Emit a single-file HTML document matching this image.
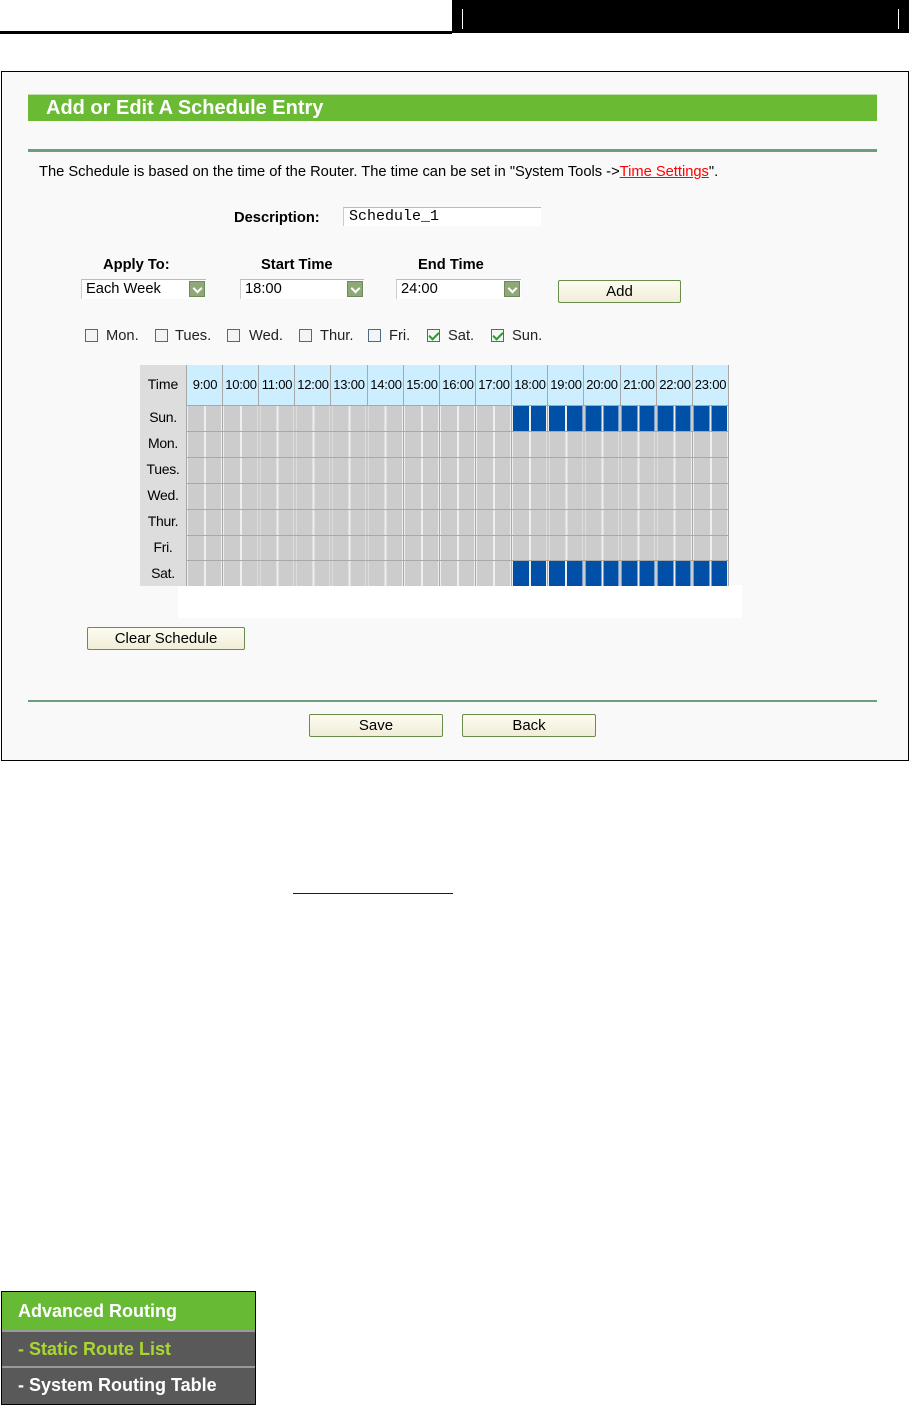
<!DOCTYPE html>
<html><head><meta charset="utf-8"><style>
*{margin:0;padding:0;box-sizing:border-box}
body{width:910px;height:1405px;background:#fff;position:relative;font-family:"Liberation Sans",Arial,sans-serif;overflow:hidden;color:#000}
.a{position:absolute}
.t{font-size:14.7px;white-space:nowrap}
.b{font-weight:bold}
.sel{position:absolute;height:20px;background:#fff;border-top:1px solid #bbb;border-left:1px solid #ccc;font-size:14.7px;padding:2px 4px;line-height:15px}
.sel i{position:absolute;right:1px;top:1px;width:16px;height:16px;background:#8fa878;border:1px solid #6c8a5a}
.sel i:after{content:"";position:absolute;left:4px;top:3px;width:5px;height:5px;border-right:2px solid #fff;border-bottom:2px solid #fff;transform:rotate(45deg)}
.btn{position:absolute;height:23px;background:linear-gradient(#fdfcf0,#f0edd8);border:1px solid #6b8c4a;border-radius:2px;font-size:15px;text-align:center;line-height:21px}
.cb{position:absolute;width:13px;height:13px;border:1px solid #4c6a8a;background:#f4f4f4}
.cb.c:after{content:"";position:absolute;left:3px;top:0px;width:4px;height:8px;border-right:2px solid #2a9a2a;border-bottom:2px solid #2a9a2a;transform:rotate(45deg)}
.row{position:absolute;left:186px;width:542px;height:26px;border-top:1px solid #a8a8a8;background:repeating-linear-gradient(90deg,#a8a8a8 0 1px,#eee 1px 2px,#ccc 2px 18px,#eee 18px 20px,#ccc 20px 35.13px,#eee 35.13px 36.13px)}
.blue{position:absolute;left:325.2px;top:0;width:216.8px;height:25px;background:repeating-linear-gradient(90deg,#a8a8a8 0 1px,#eee 1px 2px,#0050a8 2px 18px,#eee 18px 20px,#0050a8 20px 35.13px,#eee 35.13px 36.13px)}
.lab{position:absolute;left:140px;width:46px;height:26px;font-size:14px;text-align:center;line-height:26px;background:#ddd;letter-spacing:-0.3px}
.hd{position:absolute;top:365px;height:40px;background:#cceeff;border-left:1px solid #a8a8a8;font-size:13px;line-height:40px;text-align:center;letter-spacing:-0.2px}
</style></head><body>
<div class="a" style="left:0;top:31px;width:452px;height:3px;background:#000"></div>
<div class="a" style="left:452px;top:0;width:457px;height:33px;background:#000"></div>
<div class="a" style="left:462px;top:9px;width:1px;height:20px;background:#fff"></div>
<div class="a" style="left:898px;top:9px;width:1px;height:20px;background:#fff"></div>

<div class="a" style="left:1px;top:71px;width:908px;height:690px;border:1px solid #000;background:#f9f9f9"></div>
<div class="a" style="left:28px;top:94px;width:849px;height:27px;background:#6aba34;color:#fff;font-size:20px;font-weight:bold;padding-left:18px;line-height:26px;border-top:1px solid #bfe0a8">Add or Edit A Schedule Entry</div>
<div class="a" style="left:28px;top:149px;width:849px;height:3px;background:#6b9e79"></div>
<div class="a t" style="left:39px;top:164px">The Schedule is based on the time of the Router. The time can be set in "System Tools -&gt;<span style="color:#f00;text-decoration:underline">Time Settings</span>".</div>

<div class="a t b" style="left:234px;top:210px">Description:</div>
<div class="a" style="left:343px;top:207px;width:198px;height:19px;background:#fff;border-top:1px solid #bbb;border-left:1px solid #ccc;font-family:'Liberation Mono',monospace;font-size:15px;padding:0 5px;line-height:18px">Schedule_1</div>

<div class="a t b" style="left:103px;top:257px">Apply To:</div>
<div class="a t b" style="left:261px;top:257px">Start Time</div>
<div class="a t b" style="left:418px;top:257px">End Time</div>
<div class="sel" style="left:81px;top:279px;width:125px">Each Week<i></i></div>
<div class="sel" style="left:240px;top:279px;width:124px">18:00<i></i></div>
<div class="sel" style="left:396px;top:279px;width:125px">24:00<i></i></div>
<div class="btn" style="left:558px;top:280px;width:123px">Add</div>

<div class="cb" style="left:85px;top:329px"></div><div class="a t" style="left:106px;top:328px;color:#222">Mon.</div>
<div class="cb" style="left:155px;top:329px"></div><div class="a t" style="left:175px;top:328px;color:#222">Tues.</div>
<div class="cb" style="left:227px;top:329px"></div><div class="a t" style="left:249px;top:328px;color:#222">Wed.</div>
<div class="cb" style="left:299px;top:329px"></div><div class="a t" style="left:320px;top:328px;color:#222">Thur.</div>
<div class="cb" style="left:368px;top:329px"></div><div class="a t" style="left:389px;top:328px;color:#222">Fri.</div>
<div class="cb c" style="left:427px;top:329px"></div><div class="a t" style="left:448px;top:328px;color:#222">Sat.</div>
<div class="cb c" style="left:491px;top:329px"></div><div class="a t" style="left:512px;top:328px;color:#222">Sun.</div>

<div class="a" style="left:178px;top:585px;width:564px;height:33px;background:#fff"></div>
<div class="a" style="left:140px;top:365px;width:589px;height:221px;background:#ddd;border-bottom:1px solid #a8a8a8;border-right:1px solid #a8a8a8"></div>
<div class="a t" style="left:140px;top:376px;width:46px;text-align:center;font-size:14px">Time</div>
<div class="hd" style="left:186px;width:37px">9:00</div>
<div class="hd" style="left:222px;width:37px">10:00</div>
<div class="hd" style="left:258px;width:37px">11:00</div>
<div class="hd" style="left:294px;width:37px">12:00</div>
<div class="hd" style="left:330px;width:37px">13:00</div>
<div class="hd" style="left:367px;width:37px">14:00</div>
<div class="hd" style="left:403px;width:37px">15:00</div>
<div class="hd" style="left:439px;width:37px">16:00</div>
<div class="hd" style="left:475px;width:37px">17:00</div>
<div class="hd" style="left:511px;width:37px">18:00</div>
<div class="hd" style="left:547px;width:37px">19:00</div>
<div class="hd" style="left:583px;width:37px">20:00</div>
<div class="hd" style="left:620px;width:37px">21:00</div>
<div class="hd" style="left:656px;width:37px">22:00</div>
<div class="hd" style="left:692px;width:37px;border-right:1px solid #a8a8a8">23:00</div>

<div class="lab" style="top:404px">Sun.</div><div class="row" style="top:405px"><div class="blue"></div></div>
<div class="lab" style="top:430px">Mon.</div><div class="row" style="top:431px"></div>
<div class="lab" style="top:456px">Tues.</div><div class="row" style="top:457px"></div>
<div class="lab" style="top:482px">Wed.</div><div class="row" style="top:483px"></div>
<div class="lab" style="top:508px">Thur.</div><div class="row" style="top:509px"></div>
<div class="lab" style="top:534px">Fri.</div><div class="row" style="top:535px"></div>
<div class="lab" style="top:560px">Sat.</div><div class="row" style="top:560px"><div class="blue"></div></div>

<div class="btn" style="left:87px;top:627px;width:158px">Clear Schedule</div>
<div class="a" style="left:28px;top:700px;width:849px;height:2px;background:#6b9e79"></div>
<div class="btn" style="left:309px;top:714px;width:134px">Save</div>
<div class="btn" style="left:462px;top:714px;width:134px">Back</div>

<div class="a" style="left:293px;top:893px;width:160px;height:1px;background:#00f"></div>

<div class="a" style="left:1px;top:1291px;width:255px;height:114px;border:1px solid #000;background:#595959"></div>
<div class="a" style="left:2px;top:1292px;width:253px;height:38px;background:#67ba34;color:#fff;font-weight:bold;font-size:18px;padding-left:16px;line-height:38px">Advanced Routing</div>
<div class="a" style="left:2px;top:1330px;width:253px;height:2px;background:#999"></div>
<div class="a" style="left:2px;top:1332px;width:253px;height:34px;color:#a8d830;font-weight:bold;font-size:18px;padding-left:16px;line-height:34px">- Static Route List</div>
<div class="a" style="left:2px;top:1366px;width:253px;height:2px;background:#999"></div>
<div class="a" style="left:2px;top:1368px;width:253px;height:35px;color:#fff;font-weight:bold;font-size:18px;padding-left:16px;line-height:35px">- System Routing Table</div>
</body></html>
